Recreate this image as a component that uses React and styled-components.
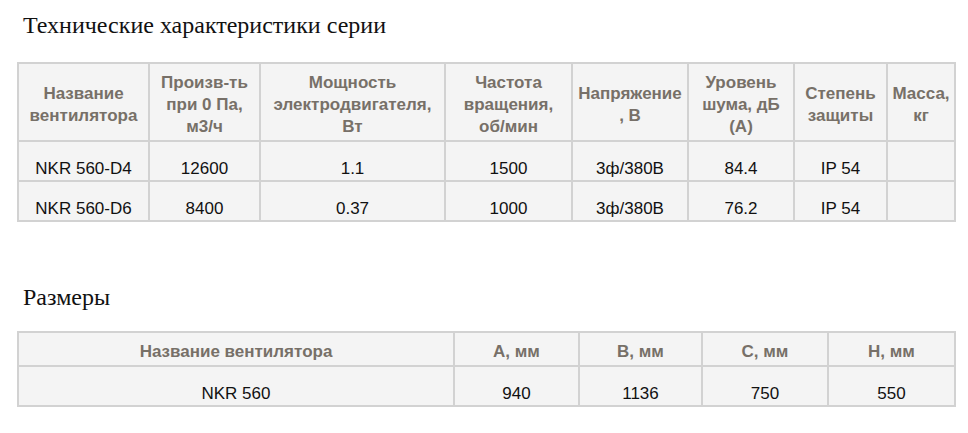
import React from "react";
import styled, { createGlobalStyle } from "styled-components";

const GlobalStyle = createGlobalStyle`
  html, body {
    margin: 0;
    padding: 0;
    background: #fff;
  }
  body {
    font-family: "Liberation Sans", Arial, sans-serif;
  }
`;

const Page = styled.div`
  width: 968px;
  padding: 11px 0 0 17px;
  box-sizing: border-box;
`;

const Heading = styled.h2`
  margin: ${(p) => p.$top || 0}px 0 0 6px;
  font-family: "Liberation Serif", "Times New Roman", serif;
  font-weight: 400;
  font-size: 24px;
  line-height: 28px;
  color: #111;
`;

const Table = styled.table`
  margin-top: ${(p) => p.$gap}px;
  width: 937px;
  table-layout: fixed;
  border-collapse: collapse;
  background: #f4f4f4;
  border: 2px solid #cfcfcf;
`;

const Col = styled.col`
  width: ${(p) => p.$w}px;
`;

const HeadCell = styled.th`
  height: ${(p) => p.$h}px;
  padding: 5px 2px 0;
  border: 2px solid #d2d2d2;
  vertical-align: middle;
  text-align: center;
  font-size: 17px;
  font-weight: 700;
  line-height: 22px;
  color: #777068;
  box-sizing: border-box;
`;

const Cell = styled.td`
  height: 40px;
  padding: 16px 4px 0;
  border: 2px solid #d2d2d2;
  vertical-align: top;
  text-align: center;
  font-size: 17px;
  line-height: 22px;
  color: #111;
  box-sizing: border-box;
`;

const specCols = [131, 111, 185, 127, 116, 106, 93, 68];
const specHead = [
  ["Название", "вентилятора"],
  ["Произв-ть", "при 0 Па,", "м3/ч"],
  ["Мощность", "электродвигателя,", "Вт"],
  ["Частота", "вращения,", "об/мин"],
  ["Напряжение", ", В"],
  ["Уровень", "шума, дБ", "(А)"],
  ["Степень", "защиты"],
  ["Масса,", "кг"],
];
const specRows = [
  ["NKR 560-D4", "12600", "1.1", "1500", "3ф/380В", "84.4", "IP 54", ""],
  ["NKR 560-D6", "8400", "0.37", "1000", "3ф/380В", "76.2", "IP 54", ""],
];

const sizeCols = [436, 125, 123, 126, 127];
const sizeHead = ["Название вентилятора", "А, мм", "В, мм", "С, мм", "Н, мм"];
const sizeRows = [["NKR 560", "940", "1136", "750", "550"]];

const Lines = ({ lines }) =>
  lines.map((l, i) => (
    <React.Fragment key={i}>
      {i > 0 && <br />}
      {l}
    </React.Fragment>
  ));

const App = () => {
  return (
    <>
      <GlobalStyle />
      <Page>
        <Heading>Технические характеристики серии</Heading>
        <Table $gap={23}>
          <colgroup>
            {specCols.map((w, i) => (
              <Col key={i} $w={w} />
            ))}
          </colgroup>
          <thead>
            <tr>
              {specHead.map((h, i) => (
                <HeadCell key={i} $h={78}>
                  <Lines lines={h} />
                </HeadCell>
              ))}
            </tr>
          </thead>
          <tbody>
            {specRows.map((r, i) => (
              <tr key={i}>
                {r.map((c, j) => (
                  <Cell key={j}>{c}</Cell>
                ))}
              </tr>
            ))}
          </tbody>
        </Table>

        <Heading $top={61}>Размеры</Heading>
        <Table $gap={20}>
          <colgroup>
            {sizeCols.map((w, i) => (
              <Col key={i} $w={w} />
            ))}
          </colgroup>
          <thead>
            <tr>
              {sizeHead.map((h, i) => (
                <HeadCell key={i} $h={34}>
                  {h}
                </HeadCell>
              ))}
            </tr>
          </thead>
          <tbody>
            {sizeRows.map((r, i) => (
              <tr key={i}>
                {r.map((c, j) => (
                  <Cell key={j}>{c}</Cell>
                ))}
              </tr>
            ))}
          </tbody>
        </Table>
      </Page>
    </>
  );
};

export default App;
